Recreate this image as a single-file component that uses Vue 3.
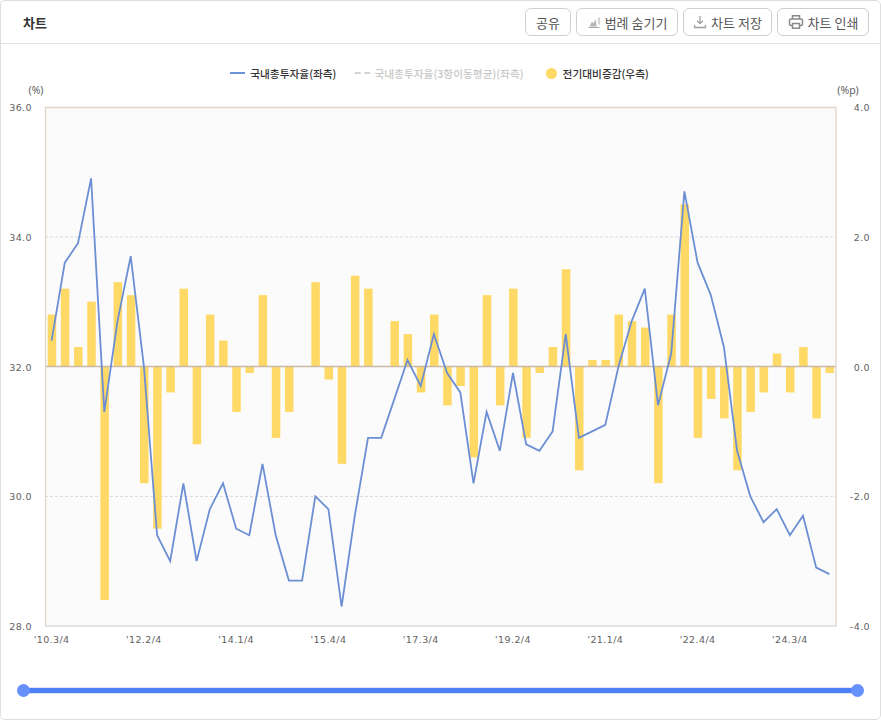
<template>
  <div class="chart-card">
    <header class="chart-head">
      <h2 class="chart-title">차트</h2>
      <div class="chart-actions">
        <button type="button" class="tool-btn share">공유</button>
        <button type="button" class="tool-btn legend-btn">
          <svg class="tool-icon" viewBox="0 0 14 14" fill="none" stroke="#a8a8a8" stroke-width="1">
            <path d="M1.500 12.500h11" />
            <path d="M2.500 11.500 5 6.500l1.500 2L8.500 4l1.200 7.500z" fill="#b4b4b4" stroke="none" />
            <path d="M12 2.500v7" />
          </svg>
          범례 숨기기
        </button>
        <button type="button" class="tool-btn save-btn">
          <svg class="tool-icon" viewBox="0 0 14 14" fill="none" stroke="#a0a0a0" stroke-width="1.300">
            <path d="M7 1v7.500M4 5.700 7 8.700l3-3" />
            <path d="M1.500 10v2.500h11V10" />
          </svg>
          차트 저장
        </button>
        <button type="button" class="tool-btn print-btn">
          <svg class="tool-icon print" viewBox="0 0 16 16" fill="none" stroke="#8a8a8a" stroke-width="1.500">
            <path d="M4.500 5V1.800h7V5" />
            <rect x="1.500" y="5" width="13" height="6.500" rx="1.500" />
            <rect x="4.500" y="9.500" width="7" height="4.700" fill="#fff" />
          </svg>
          차트 인쇄
        </button>
      </div>
    </header>

    <div class="legend">
      <span class="legend-item"><i class="mark-line"></i>국내총투자율(좌측)</span>
      <span class="legend-item off"><i class="mark-dash"></i>국내총투자율(3항이동평균)(좌측)</span>
      <span class="legend-item"><i class="mark-dot"></i>전기대비증감(우측)</span>
    </div>

    <svg class="plot" width="879" height="567" viewBox="1 83 879 567">
      <text class="unit" x="36" y="94" text-anchor="middle">(%)</text>
      <text class="unit" x="848" y="94" text-anchor="middle">(%p)</text>

      <rect x="45" y="107" width="791" height="519" fill="#fbfbfb" />
      <line
        v-for="g in grid"
        :key="g"
        x1="45"
        x2="836"
        :y1="g"
        :y2="g"
        stroke="#dcdcdc"
        stroke-dasharray="3 2"
      />
      <rect
        v-for="b in bars"
        :key="b.x"
        class="bar"
        :x="b.x"
        :y="b.y"
        width="8.500"
        :height="b.h"
      />
      <line x1="45" x2="836" y1="366.500" y2="366.500" stroke="#c9b8a4" stroke-width="1.500" />
      <path d="M45.500 626V107.500H836V626" fill="none" stroke="#e0d6ca" stroke-width="1.300" />
      <line x1="45" x2="836" y1="626" y2="626" stroke="#dcdae0" stroke-width="1.500" />
      <polyline class="rate" :points="linePoints" />

      <text
        v-for="t in leftTicks"
        :key="t.label"
        class="tick"
        x="32"
        :y="t.y"
        text-anchor="end"
      >{{ t.label }}</text>
      <text
        v-for="t in rightTicks"
        :key="t.label"
        class="tick"
        x="870"
        :y="t.y"
        text-anchor="end"
      >{{ t.label }}</text>
      <text
        v-for="t in dateTicks"
        :key="t.label"
        class="tick"
        :x="t.x"
        y="643"
        text-anchor="middle"
      >{{ t.label }}</text>
    </svg>

    <div class="range">
      <span class="range-knob"></span>
      <span class="range-bar"></span>
      <span class="range-knob"></span>
    </div>
  </div>
</template>

<script setup>
const rates = [
  32.4, 33.6, 33.9, 34.9, 31.3, 32.7, 33.7, 32.0, 29.4, 29.0,
  30.2, 29.0, 29.8, 30.2, 29.5, 29.4, 30.5, 29.4, 28.7, 28.7,
  30.0, 29.8, 28.3, 29.7, 30.9, 30.9, 31.5, 32.1, 31.7, 32.5,
  31.9, 31.6, 30.2, 31.3, 30.7, 31.9, 30.8, 30.7, 31.0, 32.5,
  30.9, 31.0, 31.1, 32.0, 32.7, 33.2, 31.4, 32.2, 34.7, 33.6,
  33.1, 32.3, 30.7, 30.0, 29.6, 29.8, 29.4, 29.7, 28.9, 28.8
]

const changes = [
  0.8, 1.2, 0.3, 1.0, -3.6, 1.3, 1.1, -1.8, -2.5, -0.4,
  1.2, -1.2, 0.8, 0.4, -0.7, -0.1, 1.1, -1.1, -0.7, 0,
  1.3, -0.2, -1.5, 1.4, 1.2, 0, 0.7, 0.5, -0.4, 0.8,
  -0.6, -0.3, -1.4, 1.1, -0.6, 1.2, -1.1, -0.1, 0.3, 1.5,
  -1.6, 0.1, 0.1, 0.8, 0.7, 0.6, -1.8, 0.8, 2.5, -1.1,
  -0.5, -0.8, -1.6, -0.7, -0.4, 0.2, -0.4, 0.3, -0.8, -0.1
]

const step = 791 / 60
const unit = 519 / 8
const zero = 366.5
const centerX = (i) => 45 + step * (i + 0.5)

const linePoints = rates
  .map((v, i) => `${centerX(i).toFixed(1)},${(626 - (v - 28) * unit).toFixed(1)}`)
  .join(' ')

const bars = changes.map((v, i) => ({
  x: centerX(i) - 3.9,
  y: v > 0 ? zero - v * unit : zero,
  h: Math.abs(v) * unit
}))

const grid = [237, 496.5]

const leftTicks = ['36.0', '34.0', '32.0', '30.0', '28.0'].map((label, i) => ({
  label,
  y: 111 + i * 129.75
}))
const rightTicks = ['4.0', '2.0', '0.0', '-2.0', '-4.0'].map((label, i) => ({
  label,
  y: 111 + i * 129.75
}))

const dateTicks = ["'10.3/4", "'12.2/4", "'14.1/4", "'15.4/4", "'17.3/4", "'19.2/4", "'21.1/4", "'22.4/4", "'24.3/4"].map(
  (label, i) => ({ label, x: centerX(i * 7) })
)
</script>

<style scoped>
.chart-card {
  box-sizing: border-box;
  width: 881px;
  height: 720px;
  border: 1px solid #dedede;
  border-radius: 5px;
  background: #fff;
  overflow: hidden;
  font-family: "Noto Sans CJK KR", "Noto Sans", sans-serif;
}

.chart-head {
  display: flex;
  align-items: center;
  justify-content: space-between;
  height: 42px;
  padding: 0 11px 0 22px;
  border-bottom: 1px solid #e2e2e2;
}

.chart-title {
  margin: 0;
  font-size: 13px;
  font-weight: 700;
  color: #333;
}

.chart-actions {
  display: flex;
  gap: 5px;
}

.tool-btn {
  display: flex;
  align-items: center;
  justify-content: center;
  gap: 4px;
  box-sizing: border-box;
  height: 28px;
  padding: 0;
  border: 1px solid #cfcfcf;
  border-radius: 6px;
  background: #fff;
  font-family: inherit;
  font-size: 13px;
  color: #555;
  white-space: nowrap;
}

.tool-btn.share {
  width: 46px;
}

.tool-btn.legend-btn {
  width: 102px;
}

.tool-btn.save-btn {
  width: 89px;
}

.tool-btn.print-btn {
  width: 92px;
}

.tool-icon {
  width: 14px;
  height: 14px;
}

.tool-icon.print {
  width: 16px;
  height: 16px;
}

.legend {
  display: flex;
  justify-content: center;
  gap: 19px;
  height: 19px;
  padding: 20px 2px 0 0;
  font-size: 10.700px;
  font-weight: 500;
  color: #333;
}

.legend-item {
  display: flex;
  align-items: center;
  height: 18px;
  white-space: nowrap;
}

.legend-item.off {
  color: #c8c8c8;
}

.mark-line,
.mark-dash {
  width: 15px;
  margin-right: 5px;
  border-top: 2px solid #6c93d8;
}

.mark-dash {
  margin-right: 4px;
  border-top: 2px dashed #d2d2d2;
}

.mark-dot {
  width: 11px;
  height: 11px;
  margin-left: 3px;
  margin-right: 6px;
  border-radius: 50%;
  background: #ffd966;
}

.plot {
  display: block;
}

.tick {
  font-family: "DejaVu Sans", sans-serif;
  font-size: 9.500px;
  letter-spacing: 0.4px;
  fill: #5f5f5f;
}

.unit {
  font-family: "Noto Sans", sans-serif;
  font-size: 10.500px;
  fill: #5f5f5f;
}

.bar {
  fill: #ffd966;
}

.rate {
  fill: none;
  stroke: #6c8fd4;
  stroke-width: 1.800;
}

.range {
  display: flex;
  align-items: center;
  margin: 34px 16px 0;
}

.range-bar {
  flex: 1;
  height: 5px;
  margin: 0 -3px;
  background: #4d7ff7;
  box-shadow: 0 0 0 1px #dde4f5;
}

.range-knob {
  position: relative;
  z-index: 1;
  width: 13px;
  height: 13px;
  border-radius: 50%;
  background: #6690fb;
}
</style>
